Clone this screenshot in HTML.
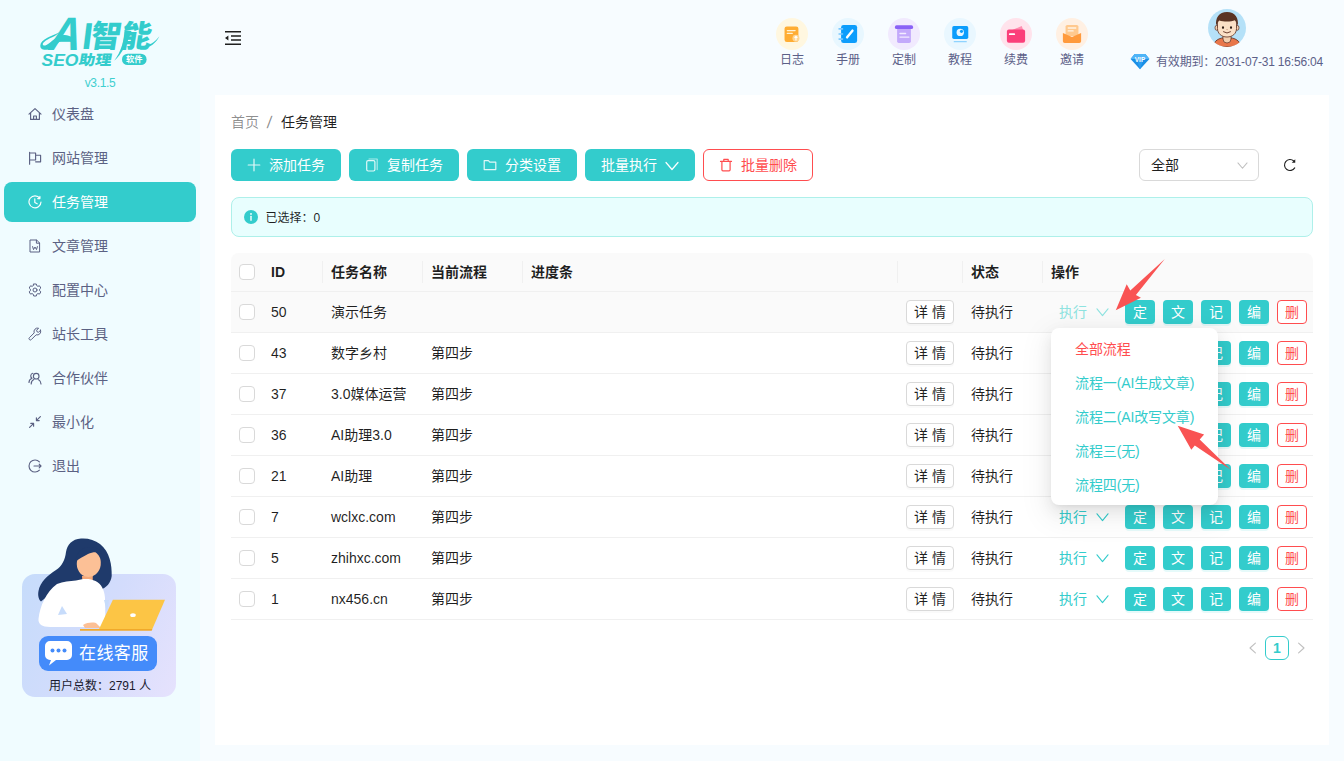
<!DOCTYPE html>
<html lang="zh-CN">
<head>
<meta charset="utf-8">
<title>任务管理</title>
<style>
*{box-sizing:border-box;margin:0;padding:0}
html,body{width:1344px;height:761px;overflow:hidden}
body{font-family:"Liberation Sans","Noto Sans CJK SC",sans-serif;font-size:14px;line-height:22px;color:rgba(0,0,0,.88);background:#f7fcff;position:relative}
.abs{position:absolute}
/* sidebar */
#side{position:absolute;left:0;top:0;width:200px;height:761px;background:#f0fcff}
.ver{position:absolute;left:0;width:200px;top:74px;text-align:center;font-size:12px;line-height:18px;color:#3fcfcf;letter-spacing:-.35px}
.mi{position:absolute;left:4px;width:192px;height:40px;border-radius:8px;color:#5b6183;font-size:14px;line-height:40px}
.mi svg{position:absolute;left:24px;top:13px;width:14px;height:14px;fill:none;stroke:currentColor;stroke-width:1.15;stroke-linecap:round;stroke-linejoin:round}
.mi span{position:absolute;left:48px;top:0}
.mi.on{background:#33cccc;color:#fff}
/* top bar */
.tool{position:absolute;top:18px;width:56px;text-align:center}
.tool i{display:block;width:32px;height:32px;border-radius:50%;margin:0 auto;position:relative}
.tool i svg{position:absolute;left:6px;top:6px;width:20px;height:20px}
.tool i svg.s{left:7px;top:6.500px;width:18.500px;height:18.500px}
.tool b{display:block;font-weight:400;font-size:12px;line-height:18px;color:#5c6088;margin-top:1px}
/* card */
#card{position:absolute;left:215px;top:95px;width:1114px;height:650px;background:#fff}
.btn{position:absolute;top:149px;height:32px;width:110px;border-radius:6px;background:#33cccc;color:#fff;font-size:14px;line-height:32px}
.btn svg{position:absolute;left:16px;top:9px;width:14px;height:14px;fill:none;stroke:rgba(255,255,255,.85);stroke-width:1.2;stroke-linecap:round;stroke-linejoin:round}
.btn span{position:absolute;left:38px;top:0;white-space:nowrap}

.bc{position:absolute;top:111px;font-size:14px;line-height:22px;white-space:nowrap}
.alert{position:absolute;left:231px;top:197px;width:1082px;height:40px;border:1px solid #aef0ea;background:#e8fefe;border-radius:8px}
.alert span{position:absolute;left:33.500px;top:9px;font-size:12px;line-height:22px;color:rgba(0,0,0,.88)}
.sel{position:absolute;left:1139px;top:149px;width:120px;height:32px;border:1px solid #d9d9d9;border-radius:6px;background:#fff}
.sel span{position:absolute;left:11px;top:4px}
#tb{position:absolute;left:231px;top:253px;width:1082px}
.th{position:relative;height:39px;background:#fafafa;border-bottom:1px solid #f0f0f0;border-radius:8px 8px 0 0;font-weight:700}
.th s{position:absolute;top:8px;width:1px;height:22px;background:#f0f0f0}
.tr{position:relative;height:41px;border-bottom:1px solid #f0f0f0}
.tr.hv{background:#fafafa}
.c{position:absolute;top:8px;white-space:nowrap;line-height:22px}
.tr .c{top:9px}
.cb{position:absolute;left:8px;width:16px;height:16px;border:1px solid #d9d9d9;border-radius:4px;background:#fff}
.th .cb{top:11px}.tr .cb{top:12px}
.db{position:absolute;left:675px;top:8px;width:48px;height:24px;border:1px solid #d9d9d9;border-radius:4px;background:#fff;text-align:center;line-height:22px;box-shadow:0 2px 0 rgba(0,0,0,.02)}
.lk{position:absolute;left:828px;top:9px;color:#33cccc;line-height:22px}
.lk.a{color:#8ee3e0}
.lk svg,.ch{fill:none;stroke:currentColor;stroke-width:1.1;stroke-linecap:round;stroke-linejoin:round}
.lk svg{position:absolute;left:37px;top:5px;width:13px;height:12px}
.sb{position:absolute;top:8px;width:30px;height:24px;border-radius:4px;background:#33cccc;color:#fff;text-align:center;line-height:24px;box-shadow:0 2px 0 rgba(5,205,205,.1)}
.sb.del{background:#fff;border:1px solid #ff4d4f;color:#ff4d4f;line-height:22px;box-shadow:none}
#dd{position:absolute;left:1051px;top:328px;width:167px;height:177px;background:#fff;border-radius:8px;box-shadow:0 6px 16px 0 rgba(0,0,0,.08),0 3px 6px -4px rgba(0,0,0,.12),0 9px 28px 8px rgba(0,0,0,.05)}
#dd div{position:absolute;left:24px;color:#33cccc;line-height:22px;white-space:nowrap;letter-spacing:-.12px}
.pg{position:absolute;left:1265px;top:636px;width:24px;height:24px;border:1px solid #33cccc;border-radius:6px;color:#33cccc;font-weight:700;text-align:center;line-height:22px;background:#fff}
</style>
</head>
<body>
<div id="side">
<svg class="abs" style="left:30px;top:8px" width="140" height="62" viewBox="30 8 140 62">
<g fill="#33cccc" font-family="Liberation Sans, Noto Sans CJK SC, sans-serif" font-weight="700">
<text x="0" y="0" font-size="47" font-style="italic" transform="translate(48.300 49.700) skewX(-7) scale(.93 1)">A</text>
<text x="0" y="0" font-size="37.500" font-style="italic" transform="translate(82.800 49) skewX(4)">I</text>
<text x="0" y="0" font-size="29" font-weight="900" font-family="Noto Sans CJK SC, sans-serif" transform="translate(89.500 47.200) skewX(-9) scale(1.04 1.06)" textLength="58" lengthAdjust="spacingAndGlyphs">智能</text>
<text x="0" y="0" font-size="16.500" font-style="italic" transform="translate(41.500 65.700)" textLength="37" lengthAdjust="spacingAndGlyphs">SEO</text>
<text x="0" y="0" font-size="14" font-weight="900" font-family="Noto Sans CJK SC, sans-serif" transform="translate(78 65) skewX(-10)" textLength="33" lengthAdjust="spacingAndGlyphs">助理</text>
<rect x="122" y="53.700" width="24.600" height="11.400" rx="5.700"/>
<path d="M61 31.500C52 36 40.500 39 40.300 45.500c-.2 5 6 5.500 11 2.500 5-3 8.500-7.500 13.500-8.500 4.500-.900 8.500 1 11.500 4.500-2-5.500-6.500-9.500-12.500-9-6 .5-10.500 5-15 8.500-2.500 2-5.500 3-6 1-.6-2.200 5-5.500 12-8.500z"/>
<path d="M124.500 30c0 10-3.500 22-10.300 30.800C121.500 54.500 127.500 43 131.500 31z"/>
<path d="M159.400 36.300c-3 6.500-9 11.500-19 13l-1-3c9 .5 15.500-4 20-10z"/>
</g>
<text x="134.300" y="62.400" font-size="8.200" font-weight="700" fill="#fff" text-anchor="middle" font-family="Noto Sans CJK SC, sans-serif">软件</text>
</svg>
  <div class="ver">v3.1.5</div>
  <div class="mi" style="top:94px"><svg viewBox="0 0 14 14"><path d="M1 7.2 7 1.6l6 5.6M2.6 6v6.4h8.8V6M5.6 12.4V9h2.8v3.4"/></svg><span>仪表盘</span></div>
  <div class="mi" style="top:138px"><svg viewBox="0 0 14 14"><path d="M1.6 1.2v12M1.6 2h6v7h-6M7.6 4.2h5v6.6h-5"/></svg><span>网站管理</span></div>
  <div class="mi on" style="top:182px"><svg viewBox="0 0 14 14"><path d="M11.9 3.4A6 6 0 1 0 13 7M11.9 1.4v2.2h-2.2M6.8 3.8v3.6l2.4 1.4"/></svg><span>任务管理</span></div>
  <div class="mi" style="top:226px"><svg viewBox="0 0 14 14"><path d="M2.4 1h6.2l3 3v9H2.4zM8.4 1v3.2h3.2M4.6 7.6l.9 3 1.5-2.6 1.5 2.6.9-3" stroke-width="1"/></svg><span>文章管理</span></div>
  <div class="mi" style="top:270px"><svg viewBox="0 0 14 14"><path d="M5.7 1h2.6l.4 1.6 1.2.7 1.6-.5 1.3 2.2-1.2 1.2v1.5l1.2 1.2-1.3 2.2-1.6-.5-1.2.7L8.300 13H5.700l-.4-1.700-1.200-.7-1.600.5L1.200 8.900l1.200-1.200V6.200L1.200 5 2.500 2.800l1.600.5 1.200-.7z" stroke-width="1"/><circle cx="7" cy="7" r="2" stroke-width="1"/></svg><span>配置中心</span></div>
  <div class="mi" style="top:314px"><svg viewBox="0 0 14 14"><path d="M12.600 3.200l-2 2-1.600-.4-.400-1.600 2-2a3.600 3.600 0 0 0-4.400 4.700L1.400 10.700a1.300 1.300 0 0 0 1.900 1.900l4.800-4.800a3.600 3.600 0 0 0 4.500-4.600z" stroke-width="1"/></svg><span>站长工具</span></div>
  <div class="mi" style="top:358px"><svg viewBox="0 0 14 14"><circle cx="8.200" cy="5.200" r="2.800"/><path d="M3.200 13a5 5 0 0 1 2.600-4.400M13 13a5 5 0 0 0-2.400-4.300M4.800 2.300A2.700 2.700 0 0 0 4 7.200M1 11.400a4.300 4.300 0 0 1 2.600-3.900"/></svg><span>合作伙伴</span></div>
  <div class="mi" style="top:402px"><svg viewBox="0 0 14 14"><path d="M1.600 12.400 5.400 8.600M5.600 11.200V8.400H2.800M12.400 1.600 8.600 5.400M8.400 2.800v2.800h2.800"/></svg><span>最小化</span></div>
  <div class="mi" style="top:446px"><svg viewBox="0 0 14 14"><path d="M11.400 2.900a6 6 0 1 0 0 8.200M6 7h7M11.200 5.200 13 7l-1.800 1.800"/></svg><span>退出</span></div>
<div class="abs" style="left:22px;top:574px;width:154px;height:123px;border-radius:13px;background:linear-gradient(115deg,#c6dcfb 0%,#d3dcfc 50%,#e6e2fd 100%)"></div>
  <svg class="abs" style="left:22px;top:534px" width="154" height="100" viewBox="22 534 154 100">
    <path d="M81 538.500C72 539 67 545 66 552c-1 8-4 14-10 18-8 5-16 12-17.500 21-1 5 .5 9 2.500 10.500L60 586l40 4c6-2 11-7 11.700-14 .3-11-1.700-24-11.700-32-5-4-12-6-19-5.500z" fill="#1f3a6b"/>
    <path d="M82 576c0 4 1 7 3 9l9-1c-1.500-3-1.500-6-1-9z" fill="#f6a97a"/>
    <ellipse cx="88.800" cy="563.500" rx="12" ry="13.500" fill="#fcc096" transform="rotate(8 88.800 563.500)"/>
    <path d="M75 562c1-10 8-16 17-15 5 .5 9 3 10 7-4-2.500-9-2.500-14 0-5 2.500-9 5-13 8z" fill="#1f3a6b"/>
    <path d="M76 580.500c6-2 14-2.500 19.500.5 6 3 9 9 9.500 17l.5 29H50c-8 0-12-3-11.500-8 1.500-13 7.500-27 18.500-35 6-2.500 13-3 19-3.500z" fill="#fff"/>
    <path d="M62 606l-4 9 9-1zM104 600h5l-2 12z" fill="#c7dcfb"/>
    <path d="M83 625c4-2.500 9-3 13-2l5 5H85z" fill="#fcc096"/>
    <path d="M112.900 599.800H165L152 629.800H98.700z" fill="#fcc545"/>
    <path d="M80 629h72.300l-.6 1.800H80z" fill="#f0a92a"/>
    <ellipse cx="133" cy="615.200" rx="2.800" ry="1.900" fill="#fff"/>
  </svg>
  <div class="abs" style="left:39px;top:636px;width:118px;height:35px;border-radius:9px;background:#448bfa"></div>
  <svg class="abs" style="left:44px;top:640px" width="30" height="27" viewBox="0 0 30 27"><path d="M6 1h17a5 5 0 0 1 5 5v9a5 5 0 0 1-5 5H12l-7 5.500 2-5.500H6a5 5 0 0 1-5-5V6a5 5 0 0 1 5-5z" fill="#fff"/><circle cx="8.500" cy="10.500" r="2" fill="#448bfa"/><circle cx="14.500" cy="10.500" r="2" fill="#448bfa"/><circle cx="20.500" cy="10.500" r="2" fill="#448bfa"/></svg>
  <div class="abs" style="left:79px;top:636px;width:72px;height:35px;line-height:35px;font-size:17px;color:#fff;white-space:nowrap;letter-spacing:.4px">在线客服</div>
  <div class="abs" style="left:23px;top:677px;width:154px;text-align:center;font-size:12px;line-height:18px;color:#1a1a2e;white-space:nowrap">用户总数：2791 人</div>
</div>
<svg class="abs" style="left:224px;top:29px" width="18" height="18" viewBox="0 0 18 18"><path d="M1 2.700h16M7 6.900h10M7 11.100h10M1 15.300h16" stroke="#1f1f1f" stroke-width="1.500" fill="none"/><path d="M1 9 4.400 6.400v5.200z" fill="#1f1f1f"/></svg>
<div class="tool" style="left:764px"><i style="background:#fff7e0"><svg class="s" viewBox="0 0 18 18"><rect x="1.500" y="1.500" width="13.500" height="15" rx="2.200" fill="#ffad33"/><path d="M4.200 5.400h7.600M4.200 8.200h4.800" stroke="#fff3d6" stroke-width="1.200" stroke-linecap="round"/><circle cx="12.600" cy="13" r="3.400" fill="#ffd591"/><path d="M12.600 15.200v-4M11.200 12.400l1.400-1.400 1.400 1.400" stroke="#fff" stroke-width="1.100" fill="none"/></svg></i><b>日志</b></div>
<div class="tool" style="left:820px"><i style="background:#e8f7ff"><svg viewBox="0 0 18 18"><rect x="2.800" y="0.800" width="14.400" height="16.400" rx="2.200" fill="#0c9dfc"/><path d="M1 4.400h3M1 9h3M1 13.600h3" stroke="#7cc9ff" stroke-width="1.500" stroke-linecap="round"/><path d="M8.200 12 13 6" stroke="#fff" stroke-width="2.200" stroke-linecap="round"/></svg></i><b>手册</b></div>
<div class="tool" style="left:876px"><i style="background:#f1eafe"><svg viewBox="0 0 18 18"><rect x="2.800" y="3.500" width="12.400" height="13.500" rx="1.500" fill="#c3a9fb"/><rect x="0.800" y="1.200" width="16.400" height="3.400" rx="1.500" fill="#8a62f6"/><path d="M5.400 8.600h5M5.400 11.800h8" stroke="#f3ecff" stroke-width="1.300" stroke-linecap="round"/></svg></i><b>定制</b></div>
<div class="tool" style="left:932px"><i style="background:#e9f7ff"><svg class="s" viewBox="0 0 18 18"><rect x="1.200" y="1" width="15.600" height="12.500" rx="1.600" fill="#0c9dfc"/><circle cx="9" cy="7.200" r="3.600" fill="#e8f6ff"/><circle cx="10.200" cy="6.200" r="1.500" fill="#0c9dfc"/><path d="M3.200 16.200h11.600" stroke="#8ed3ff" stroke-width="1.300" stroke-linecap="round"/></svg></i><b>教程</b></div>
<div class="tool" style="left:988px"><i style="background:#ffe3ec"><svg viewBox="0 0 18 18"><path d="M3 6.500 14.200 1.800l1.600 4.800z" fill="#ff8fb1"/><rect x="0.800" y="5" width="16.400" height="11.800" rx="1.800" fill="#fb3f7a"/><path d="M3.400 9.200h4" stroke="#fff" stroke-width="1.600" stroke-linecap="round"/></svg></i><b>续费</b></div>
<div class="tool" style="left:1044px"><i style="background:#fff0e3"><svg viewBox="0 0 18 18"><rect x="3.200" y="0.800" width="11.600" height="10" rx="1.500" fill="#ffc98f"/><path d="M5.600 3.600h6.800M5.600 6.200h4.400" stroke="#fff4e6" stroke-width="1.200" stroke-linecap="round"/><path d="M0.800 8.200 9 11.800l8.200-3.600v7.400a1.600 1.600 0 0 1-1.600 1.600H2.400a1.600 1.600 0 0 1-1.600-1.600z" fill="#ff9a3d"/></svg></i><b>邀请</b></div>
<svg class="abs" style="left:1208px;top:9px" width="38" height="38" viewBox="0 0 38 38"><defs><clipPath id="avc"><circle cx="19" cy="19" r="19"/></clipPath></defs><g clip-path="url(#avc)"><rect width="38" height="38" fill="#b5e1f8"/><path d="M5.500 38c0-6 5-9.500 13.500-9.500S32.500 32 32.500 38z" fill="#e8764a" stroke="#5a2d1e" stroke-width=".8"/><path d="M15 26.500h8v3.500a4 4 0 0 1-8 0z" fill="#f4d0b0" stroke="#5a2d1e" stroke-width=".7"/><ellipse cx="8.800" cy="18.800" rx="1.800" ry="2.500" fill="#f4d0b0" stroke="#5a2d1e" stroke-width=".7"/><ellipse cx="29.200" cy="18.800" rx="1.800" ry="2.500" fill="#f4d0b0" stroke="#5a2d1e" stroke-width=".7"/><path d="M9.500 14c0-5 4-7.500 9.500-7.500s9.500 2.500 9.500 7.500v5.500c0 5-4 8.500-9.500 8.500s-9.500-3.500-9.500-8.500z" fill="#fbe0c6" stroke="#5a2d1e" stroke-width=".8"/><path d="M8.200 17C7 9 11 3 19 3s12 6 10.800 14c-.8-3-1.800-4.800-3-5.800-3 1.500-11 1.800-15.500.2-1.300 1-2.300 2.600-3.100 5.600z" fill="#5b3424"/><ellipse cx="15" cy="18.600" rx="1" ry="1.400" fill="#2b1a14"/><ellipse cx="23" cy="18.600" rx="1" ry="1.400" fill="#2b1a14"/><path d="M15.500 22.800q3.500 2.600 7 0" stroke="#5a2d1e" stroke-width=".9" fill="none" stroke-linecap="round"/><path d="M18.500 20.500q.5.600 1.200 0" stroke="#b0785a" stroke-width=".6" fill="none"/></g></svg>
<svg class="abs" style="left:1130px;top:53px" width="20" height="17" viewBox="0 0 20 17"><path d="M4.600 1h10.800L19.400 6 10 16.200 0.600 6z" fill="#1a8fe6"/><path d="M4.600 1h10.800L19.400 6H0.600z" fill="#4fb4f7"/><path d="M10 16.200 6.500 6h7z" fill="#2b9df0"/><text x="10" y="9.300" font-family="Liberation Sans,sans-serif" font-size="6.400" font-weight="700" fill="#fff" text-anchor="middle">VIP</text></svg>
<div class="abs" style="left:1156px;top:53px;font-size:12px;line-height:18px;color:#5c6088;white-space:nowrap;letter-spacing:-.18px">有效期到：2031-07-31 16:56:04</div>
<div id="card"></div>
<div class="bc" style="left:231px;color:rgba(0,0,0,.45)">首页</div><div class="bc" style="left:267px;top:111.500px;font-size:17px;color:rgba(0,0,0,.45);transform:skewX(-6deg)">/</div><div class="bc" style="left:281px">任务管理</div>
<div class="btn" style="left:231px"><svg viewBox="0 0 14 14"><path d="M7 1.200v11.600M1.200 7h11.600"/></svg><span>添加任务</span></div>
<div class="btn" style="left:349px"><svg viewBox="0 0 14 14"><path d="M4 1h8.200v10.600" stroke-opacity=".7"/><rect x="1.700" y="2.700" width="8.200" height="10.300" rx="1.400"/></svg><span>复制任务</span></div>
<div class="btn" style="left:467px"><svg viewBox="0 0 14 14"><path d="M1.200 2.600h4.200l1.400 1.600h6v7.400H1.200z"/></svg><span>分类设置</span></div>
<div class="btn" style="left:585px"><span style="left:16px">批量执行</span><svg style="left:80px;top:10px;stroke:#fff" viewBox="0 0 14 14"><path d="M1 3.500 7 10.500 13 3.500"/></svg></div>
<div class="btn" style="left:703px;background:#fff;border:1px solid #ff4d4f;color:#ff4d4f;line-height:30px"><svg style="left:15px;top:8px;stroke:#ff4d4f" viewBox="0 0 14 14"><path d="M1.500 3.400h11M4.800 3.200V1.400h4.400v1.800M2.900 3.600v8.200a1 1 0 0 0 1 1h6.200a1 1 0 0 0 1-1V3.600"/></svg><span style="left:37px">批量删除</span></div>
<div class="sel"><span>全部</span><svg class="ch" style="position:absolute;left:97px;top:9.500px;color:#bfbfbf" width="11" height="11" viewBox="0 0 12 12"><path d="M1 3.200 6 9 11 3.200"/></svg></div>
<svg class="abs" style="left:1283px;top:158px" width="14" height="14" viewBox="0 0 16 16"><path d="M12.300 3.400A6.300 6.300 0 1 0 13.400 11.300" fill="none" stroke="#1f1f1f" stroke-width="1.300" stroke-linecap="round"/><path d="M14 1.300v4h-4z" fill="#1f1f1f"/></svg>
<div class="alert"><svg class="abs" style="left:12px;top:12px" width="14" height="14" viewBox="0 0 14 14"><circle cx="7" cy="7" r="7" fill="#33cccc"/><circle cx="7" cy="3.900" r=".95" fill="#fff"/><rect x="6.300" y="5.800" width="1.400" height="5" rx=".4" fill="#fff"/></svg><span>已选择：0</span></div>
<div id="tb">
<div class="th"><i class="cb"></i><div class="c" style="left:40px">ID</div><s style="left:91px"></s><div class="c" style="left:100px">任务名称</div><s style="left:191px"></s><div class="c" style="left:200px">当前流程</div><s style="left:291px"></s><div class="c" style="left:300px">进度条</div><s style="left:666px"></s><s style="left:731px"></s><div class="c" style="left:740px">状态</div><s style="left:811px"></s><div class="c" style="left:820px">操作</div></div>
<div class="tr hv"><i class="cb"></i><div class="c" style="left:40px">50</div><div class="c" style="left:100px">演示任务</div><div class="c" style="left:200px"></div><div class="db">详 情</div><div class="c" style="left:740px">待执行</div><div class="lk a">执行<svg viewBox="0 0 13 12"><path d="M1 2.800 6.500 9.600 12 2.800"/></svg></div><div class="sb" style="left:894px">定</div><div class="sb" style="left:932px">文</div><div class="sb" style="left:970px">记</div><div class="sb" style="left:1008px">编</div><div class="sb del" style="left:1046px">删</div></div>
<div class="tr"><i class="cb"></i><div class="c" style="left:40px">43</div><div class="c" style="left:100px">数字乡村</div><div class="c" style="left:200px">第四步</div><div class="db">详 情</div><div class="c" style="left:740px">待执行</div><div class="lk">执行<svg viewBox="0 0 13 12"><path d="M1 2.800 6.500 9.600 12 2.800"/></svg></div><div class="sb" style="left:894px">定</div><div class="sb" style="left:932px">文</div><div class="sb" style="left:970px">记</div><div class="sb" style="left:1008px">编</div><div class="sb del" style="left:1046px">删</div></div>
<div class="tr"><i class="cb"></i><div class="c" style="left:40px">37</div><div class="c" style="left:100px">3.0媒体运营</div><div class="c" style="left:200px">第四步</div><div class="db">详 情</div><div class="c" style="left:740px">待执行</div><div class="lk">执行<svg viewBox="0 0 13 12"><path d="M1 2.800 6.500 9.600 12 2.800"/></svg></div><div class="sb" style="left:894px">定</div><div class="sb" style="left:932px">文</div><div class="sb" style="left:970px">记</div><div class="sb" style="left:1008px">编</div><div class="sb del" style="left:1046px">删</div></div>
<div class="tr"><i class="cb"></i><div class="c" style="left:40px">36</div><div class="c" style="left:100px">AI助理3.0</div><div class="c" style="left:200px">第四步</div><div class="db">详 情</div><div class="c" style="left:740px">待执行</div><div class="lk">执行<svg viewBox="0 0 13 12"><path d="M1 2.800 6.500 9.600 12 2.800"/></svg></div><div class="sb" style="left:894px">定</div><div class="sb" style="left:932px">文</div><div class="sb" style="left:970px">记</div><div class="sb" style="left:1008px">编</div><div class="sb del" style="left:1046px">删</div></div>
<div class="tr"><i class="cb"></i><div class="c" style="left:40px">21</div><div class="c" style="left:100px">AI助理</div><div class="c" style="left:200px">第四步</div><div class="db">详 情</div><div class="c" style="left:740px">待执行</div><div class="lk">执行<svg viewBox="0 0 13 12"><path d="M1 2.800 6.500 9.600 12 2.800"/></svg></div><div class="sb" style="left:894px">定</div><div class="sb" style="left:932px">文</div><div class="sb" style="left:970px">记</div><div class="sb" style="left:1008px">编</div><div class="sb del" style="left:1046px">删</div></div>
<div class="tr"><i class="cb"></i><div class="c" style="left:40px">7</div><div class="c" style="left:100px">wclxc.com</div><div class="c" style="left:200px">第四步</div><div class="db">详 情</div><div class="c" style="left:740px">待执行</div><div class="lk">执行<svg viewBox="0 0 13 12"><path d="M1 2.800 6.500 9.600 12 2.800"/></svg></div><div class="sb" style="left:894px">定</div><div class="sb" style="left:932px">文</div><div class="sb" style="left:970px">记</div><div class="sb" style="left:1008px">编</div><div class="sb del" style="left:1046px">删</div></div>
<div class="tr"><i class="cb"></i><div class="c" style="left:40px">5</div><div class="c" style="left:100px">zhihxc.com</div><div class="c" style="left:200px">第四步</div><div class="db">详 情</div><div class="c" style="left:740px">待执行</div><div class="lk">执行<svg viewBox="0 0 13 12"><path d="M1 2.800 6.500 9.600 12 2.800"/></svg></div><div class="sb" style="left:894px">定</div><div class="sb" style="left:932px">文</div><div class="sb" style="left:970px">记</div><div class="sb" style="left:1008px">编</div><div class="sb del" style="left:1046px">删</div></div>
<div class="tr"><i class="cb"></i><div class="c" style="left:40px">1</div><div class="c" style="left:100px">nx456.cn</div><div class="c" style="left:200px">第四步</div><div class="db">详 情</div><div class="c" style="left:740px">待执行</div><div class="lk">执行<svg viewBox="0 0 13 12"><path d="M1 2.800 6.500 9.600 12 2.800"/></svg></div><div class="sb" style="left:894px">定</div><div class="sb" style="left:932px">文</div><div class="sb" style="left:970px">记</div><div class="sb" style="left:1008px">编</div><div class="sb del" style="left:1046px">删</div></div>
</div>
<svg class="abs ch" style="left:1247px;top:642px;color:#bfbfbf" width="12" height="12" viewBox="0 0 12 12"><path d="M8.400 1.200 3 6l5.400 4.800"/></svg>
<div class="pg">1</div>
<svg class="abs ch" style="left:1295px;top:642px;color:#bfbfbf" width="12" height="12" viewBox="0 0 12 12"><path d="M3.600 1.200 9 6l-5.400 4.800"/></svg>
<div id="dd"><div style="top:10px;color:#ff4d4f">全部流程</div><div style="top:44px">流程一(AI生成文章)</div><div style="top:78px">流程二(AI改写文章)</div><div style="top:112px">流程三(无)</div><div style="top:146px">流程四(无)</div></div>
<svg class="abs" style="left:1100px;top:250px" width="140" height="230" viewBox="1100 250 140 230"><path d="M1164.800 258.900 1130.300 290.500 1126.700 284.200 1115.800 310.200 1140.900 297.800 1135.900 295.100z" fill="#f95353"/><path d="M1177.700 425.800 1204.100 434.600 1199.700 439.600 1230.800 469.800 1194.800 445.400 1191.300 449.700z" fill="#f95353"/></svg>

</body>
</html>
